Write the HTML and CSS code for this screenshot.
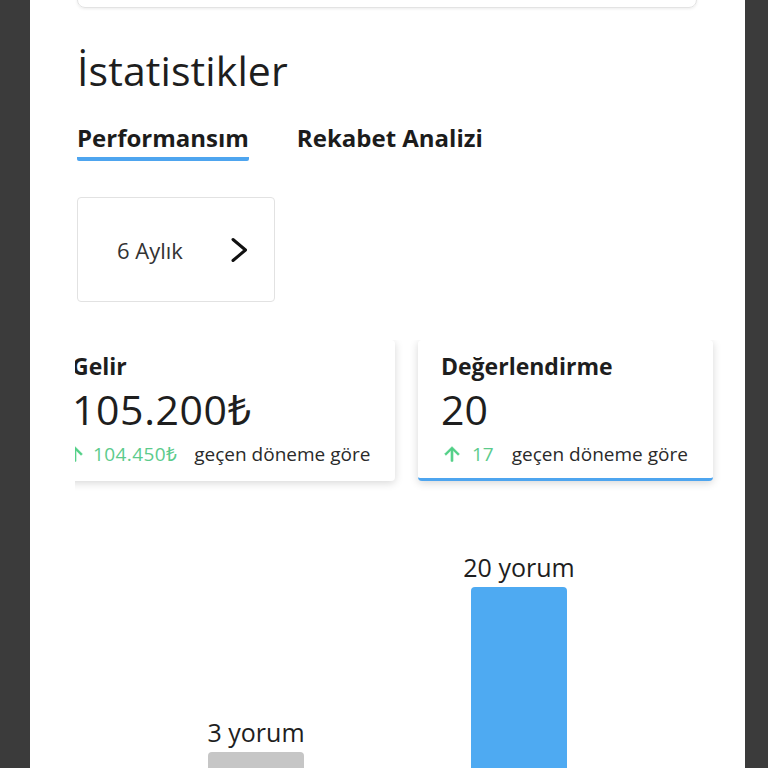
FILE: index.html
```html
<!DOCTYPE html>
<html lang="tr">
<head>
<meta charset="utf-8">
<title>İstatistikler</title>
<link rel="stylesheet" href="styles.css">
</head>
<body>
<div class="phone">
  <div class="content">
    <div class="top-card"></div>
    <h1 class="title">İstatistikler</h1>
    <div class="tabs">
      <div class="tab active">Performansım</div>
      <div class="tab">Rekabet Analizi</div>
    </div>
    <div class="period">
      <span class="period-label">6 Aylık</span>
      <svg class="chev" width="20" height="26" viewBox="0 0 20 26"><path d="M3 2.5 L15.5 13 L3 23.5" fill="none" stroke="#111" stroke-width="3" stroke-linecap="round" stroke-linejoin="round"/></svg>
    </div>
    <div class="cards-viewport">
      <div class="cards-track">
        <div class="stat-card wide">
          <div class="stat-title">Gelir</div>
          <div class="stat-value">105.200₺</div>
          <div class="stat-foot">
            <svg class="up shift" width="22" height="22" viewBox="0 0 24 24"><path d="M4 12l1.41 1.41L11 7.83V20h2V7.83l5.58 5.59L20 12l-8-8-8 8z" fill="#4fcf85" stroke="#4fcf85" stroke-width="0.8"/></svg>
            <span class="delta tight">104.450₺</span>
            <span class="foot-text">geçen döneme göre</span>
          </div>
        </div>
        <div class="stat-card selected">
          <div class="stat-title">Değerlendirme</div>
          <div class="stat-value">20</div>
          <div class="stat-foot">
            <svg class="up" width="22" height="22" viewBox="0 0 24 24"><path d="M4 12l1.41 1.41L11 7.83V20h2V7.83l5.58 5.59L20 12l-8-8-8 8z" fill="#4fcf85" stroke="#4fcf85" stroke-width="0.8"/></svg>
            <span class="delta">17</span>
            <span class="foot-text">geçen döneme göre</span>
          </div>
        </div>
      </div>
    </div>
    <div class="chart">
      <div class="col first">
        <div class="bar-label">3 yorum</div>
        <div class="bar gray" style="height:29px"></div>
      </div>
      <div class="col">
        <div class="bar-label">20 yorum</div>
        <div class="bar blue" style="height:194px"></div>
      </div>
    </div>
  </div>
</div>
</body>
</html>
```
FILE: styles.css
```css
html, body {
  margin: 0;
  padding: 0;
}
body {
  background: #3b3b3b;
  font-family: "Open Sans", "Noto Sans", sans-serif;
  color: #1e1e1e;
}
.phone {
  margin-left: 30px;
  width: 715px;
  height: 768px;
  background: #fff;
  overflow: hidden;
}
.content {
  padding: 0 48px 0 47px;
}
.top-card {
  height: 60px;
  margin-top: -54px;
  border: 1px solid #e3e3e3;
  border-radius: 8px;
  box-shadow: 0 1px 3px rgba(0,0,0,0.08);
}
.title {
  margin: 38px 0 0;
  font-size: 41px;
  line-height: 48px;
  font-weight: 400;
  color: #1e1e1e;
  letter-spacing: 0.1px;
}
.tabs {
  display: flex;
  gap: 48px;
  margin-top: 29px;
}
.tab {
  font-size: 24px;
  font-weight: 700;
  line-height: 30px;
  padding-bottom: 4px;
  border-bottom: 4px solid transparent;
  color: #1c1c1c;
}
.tab.active {
  border-bottom-color: #4ea5ef;
  border-radius: 0 0 2px 2px;
}
.period {
  margin-top: 36px;
  width: 198px;
  height: 105px;
  box-sizing: border-box;
  border: 1px solid #e2e2e2;
  border-radius: 4px;
  display: flex;
  align-items: center;
  padding-left: 39px;
}
.period-label {
  font-size: 22px;
  color: #333;
  width: 113px;
}
.chev {
  display: block;
}
.cards-viewport {
  margin-left: -2px;
  margin-top: 38px;
  margin-right: -40px;
  overflow: hidden;
  padding: 0 0 12px;
}
.cards-track {
  display: flex;
  gap: 23px;
  margin-left: -26px;
}
.stat-card {
  box-sizing: border-box;
  height: 141px;
  padding: 12px 23px 0;
  border-radius: 4px;
  background: #fff;
  box-shadow: 0 2px 8px rgba(0,0,0,0.16);
  flex: none;
}
.stat-card.wide {
  width: 346px;
}
.stat-card.selected {
  width: 295px;
  border-bottom: 3px solid #4ea5ef;
}
.stat-title {
  font-size: 23px;
  font-weight: 700;
  line-height: 28px;
}
.stat-value {
  font-size: 41px;
  line-height: 46px;
  margin-top: 6px;
}
.wide .stat-value {
  letter-spacing: 0.6px;
}
.stat-foot {
  display: flex;
  align-items: center;
  margin-top: 10px;
  font-size: 19px;
  line-height: 24px;
}
.up {
  display: block;
  margin-right: 9px;
}
.up.shift {
  margin-left: -8px;
  margin-right: 7px;
}
.delta {
  color: #5ccb8c;
  margin-right: 18px;
}
.delta.tight {
  margin-right: 17px;
  letter-spacing: 0.4px;
}
.foot-text {
  color: #2a2a2a;
}
.chart {
  display: flex;
  align-items: flex-end;
  height: 288px;
}
.col {
  width: 96px;
  display: flex;
  flex-direction: column;
  align-items: center;
  margin-left: 167px;
}
.col.first {
  margin-left: 131px;
}
.bar-label {
  font-size: 25px;
  line-height: 30px;
  white-space: nowrap;
  margin-bottom: 5px;
}
.bar {
  width: 96px;
  border-radius: 4px 4px 0 0;
}
.bar.blue {
  background: #4eaaf2;
}
.bar.gray {
  background: #c6c6c6;
}
```
